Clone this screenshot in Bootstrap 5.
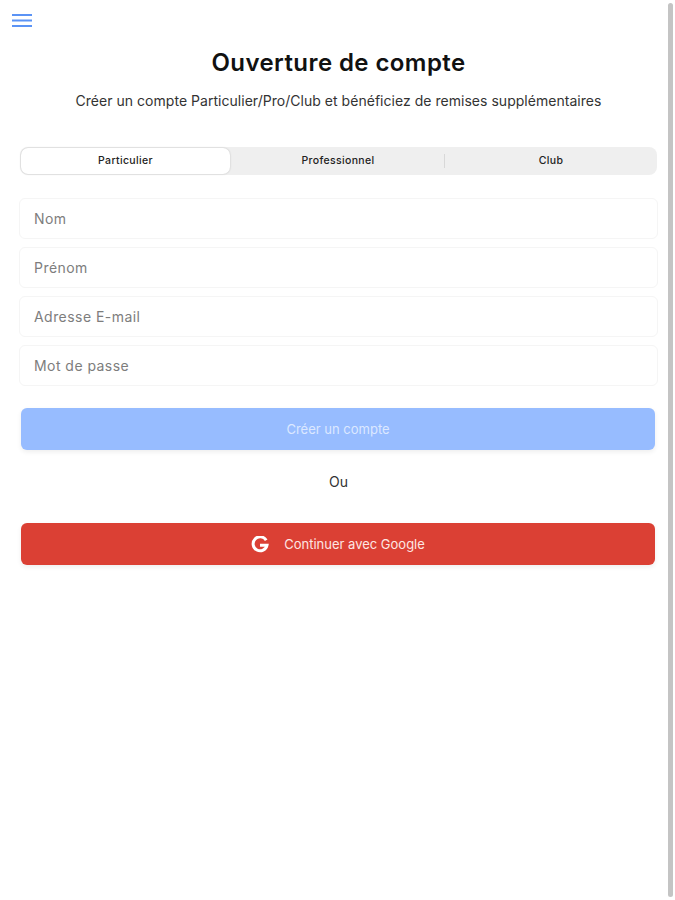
<!DOCTYPE html>
<html lang="fr">
<head>
<meta charset="utf-8">
<title>Ouverture de compte</title>
<link href="https://cdn.jsdelivr.net/npm/bootstrap@5.3.0/dist/css/bootstrap.min.css" rel="stylesheet">
<style>
html,body{height:100%;overflow:hidden}
body{font-family:Inter,"Liberation Sans",sans-serif;background:#fff;color:#222;position:relative}
.page-wrap{padding:14px 19px 0 19px;width:677px}
.burger{display:block;width:20px;height:13px;margin-left:-7px;padding:0;background:none;border:0;line-height:0}
.head-title{font-size:24px;font-weight:600;color:#111;line-height:30px;margin:21px 0 0;text-align:center;letter-spacing:.42px}
.head-sub{font-size:14px;color:#333;line-height:18px;margin:14px 0 0;text-align:center;letter-spacing:.03px}
.seg{background:#efefef;border-radius:8px;height:28px;margin:37px 1px 0;padding:1px;font-size:10.5px;font-weight:500;color:#222;letter-spacing:.35px}
.seg-item{display:flex;align-items:center;justify-content:center;border-radius:7px}
.seg-on{flex:0 0 209px;background:#fff;box-shadow:0 0 2px rgba(0,0,0,.22)}
.seg-mid{flex:0 0 214px;padding-left:2px}
.seg-end{flex:1 1 0;padding-left:1px}
.seg-div{width:1px;height:14px;background:#d8d8d8;align-self:center}
.fields{margin-top:23px;gap:8px}
.fld{height:41px;border:1px solid #f5f5f5;border-radius:6px;font-size:14px;letter-spacing:.45px;padding:0 14px;color:#333;box-shadow:none;font-family:inherit}
.fld::placeholder{color:#7d7d7d;opacity:1}
.act{height:42px;margin:0 3px 0 2px;width:calc(100% - 5px);border:0;border-radius:6px;font-size:13px;color:#fff;display:flex;align-items:center;justify-content:center;padding:2px 0 0;box-shadow:0 2px 5px rgba(0,0,0,.07)}
.act-blue,.act-blue:disabled{background:#97bcff;color:#dce8ff;opacity:1;margin-top:22px}
.act-red,.act-red:hover{background:#db4034;color:#fde6e3;gap:15px}
.alt-or{font-size:14px;color:#333;text-align:center;line-height:18px;margin:23px 0 32px}
.sbar{position:absolute;right:2px;top:3px;bottom:3px;width:5px;background:#c4c4c4;border-radius:3px}
</style>
</head>
<body>
<div class="page-wrap">
  <button class="burger" type="button" aria-label="Menu">
    <svg width="20" height="13" viewBox="0 0 20 13"><g stroke="#5b93f5" stroke-width="2"><path d="M0 1h20M0 6.500h20M0 12h20"/></g></svg>
  </button>
  <h1 class="head-title">Ouverture de compte</h1>
  <p class="head-sub">Créer un compte Particulier/Pro/Club et bénéficiez de remises supplémentaires</p>
  <div class="seg d-flex">
    <div class="seg-item seg-on">Particulier</div>
    <div class="seg-item seg-mid">Professionnel</div>
    <div class="seg-div"></div>
    <div class="seg-item seg-end">Club</div>
  </div>
  <form>
    <div class="fields d-flex flex-column">
      <input class="form-control fld" type="text" placeholder="Nom">
      <input class="form-control fld" type="text" placeholder="Prénom">
      <input class="form-control fld" type="email" placeholder="Adresse E-mail">
      <input class="form-control fld" type="password" placeholder="Mot de passe">
    </div>
    <button class="btn act act-blue" type="button" disabled>Créer un compte</button>
    <div class="alt-or">Ou</div>
    <button class="btn act act-red" type="button">
      <svg width="18" height="18" viewBox="0 0 18 18"><path fill="none" stroke="#fff" stroke-width="3" d="M15.200 4.300A7 7 0 1 0 16 9.200H9"/></svg>
      <span>Continuer avec Google</span>
    </button>
  </form>
</div>
<div class="sbar"></div>
<script src="https://cdn.jsdelivr.net/npm/bootstrap@5.3.0/dist/js/bootstrap.bundle.min.js"></script>
</body>
</html>
